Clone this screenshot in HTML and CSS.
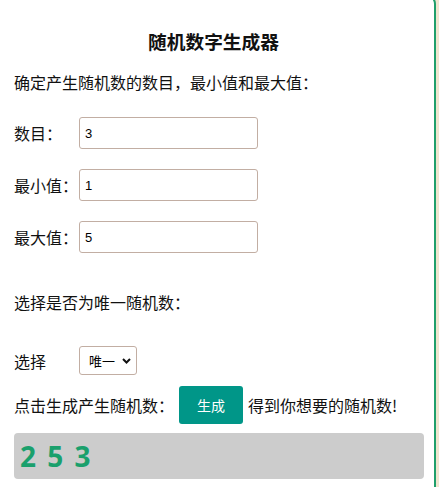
FILE: index.html
```html
<!DOCTYPE html>
<html lang="zh-CN">
<head>
<meta charset="utf-8">
<title>随机数字生成器</title>
<link rel="stylesheet" href="styles.css">
</head>
<body>
<div class="page">
  <h3 class="title">随机数字生成器</h3>
  <p class="intro">确定产生随机数的数目，最小值和最大值：</p>
  <div class="row">
    <label class="label" for="count">数目：</label>
    <input class="field" id="count" type="text" value="3">
  </div>
  <div class="row">
    <label class="label" for="min">最小值：</label>
    <input class="field" id="min" type="text" value="1">
  </div>
  <div class="row">
    <label class="label" for="max">最大值：</label>
    <input class="field" id="max" type="text" value="5">
  </div>
  <p class="question">选择是否为唯一随机数：</p>
  <div class="row select-row">
    <label class="label" for="unique">选择</label>
    <div class="select-wrap">
      <select class="select" id="unique">
        <option>唯一</option>
        <option>不唯一</option>
      </select>
      <svg class="chevron" width="9" height="6" viewBox="0 0 9 6"><path d="M1 1 L4.5 4.5 L8 1" fill="none" stroke="#111" stroke-width="2"/></svg>
    </div>
  </div>
  <div class="gen-row">
    <span>点击生成产生随机数：</span>
    <button class="btn" type="button">生成</button>
    <span>得到你想要的随机数!</span>
  </div>
  <div class="result">2 5 3</div>
</div>
</body>
</html>
```
FILE: styles.css
```css
html, body {
  margin: 0;
  padding: 0;
}
body {
  background: #efe5cf;
  font-family: "Noto Sans CJK SC", "Noto Sans", sans-serif;
  color: #111;
  overflow: hidden;
}
.page {
  box-sizing: border-box;
  width: 436px;
  height: 500px;
  margin-top: -6px;
  background: #fff;
  border-right: 2px solid #1f9f6b;
  border-top: 2px solid #1f9f6b;
  border-top-right-radius: 10px;
  padding: 0 10px 0 14px;
  display: flex;
  flex-direction: column;
}
.title {
  margin: 32px 11px 0 0;
  font-size: 18.7px;
  line-height: 26px;
  font-weight: bold;
  text-align: center;
}
.intro {
  margin: 17px 0 0;
  font-size: 16px;
  line-height: 22px;
}
.row {
  display: flex;
  align-items: center;
  margin-top: 20px;
  height: 32px;
}
.intro + .row {
  margin-top: 24px;
}
.label {
  width: 65px;
  flex: none;
  font-size: 16px;
  line-height: 22px;
}
.field {
  box-sizing: border-box;
  width: 179px;
  height: 32px;
  border: 1px solid #c2aea3;
  border-radius: 3px;
  padding: 0 5px;
  font-family: "Liberation Sans", Arial, sans-serif;
  font-size: 13px;
  color: #000;
  outline: none;
}
.question {
  margin: 38px 0 0;
  font-size: 16px;
  line-height: 22px;
}
.select-row {
  margin-top: 33px;
  height: 29px;
}
.select-wrap {
  position: relative;
  width: 58px;
  height: 29px;
}
.select {
  appearance: none;
  -webkit-appearance: none;
  box-sizing: border-box;
  width: 58px;
  height: 29px;
  border: 1px solid #c2aea3;
  border-radius: 3px;
  background: #fff;
  padding: 0 0 0 9px;
  font-family: "Noto Sans CJK SC", sans-serif;
  font-size: 13px;
  color: #000;
  outline: none;
}
.chevron {
  position: absolute;
  right: 6px;
  top: 12px;
  pointer-events: none;
}
.gen-row {
  display: flex;
  align-items: center;
  margin-top: 11px;
  font-size: 16px;
  line-height: 22px;
}
.btn {
  width: 64px;
  height: 38px;
  margin: 0 5px;
  border: none;
  border-radius: 3px;
  background: #009688;
  color: #fff;
  font-family: "Noto Sans CJK SC", sans-serif;
  font-size: 14px;
  padding: 0;
}
.result {
  margin-top: 9px;
  height: 46px;
  background: #cccccc;
  border-radius: 4px;
  padding-left: 6px;
  font-family: "Open Sans", sans-serif;
  font-weight: bold;
  font-size: 28px;
  line-height: 46px;
  word-spacing: 4px;
  color: #1aa06c;
}
```
